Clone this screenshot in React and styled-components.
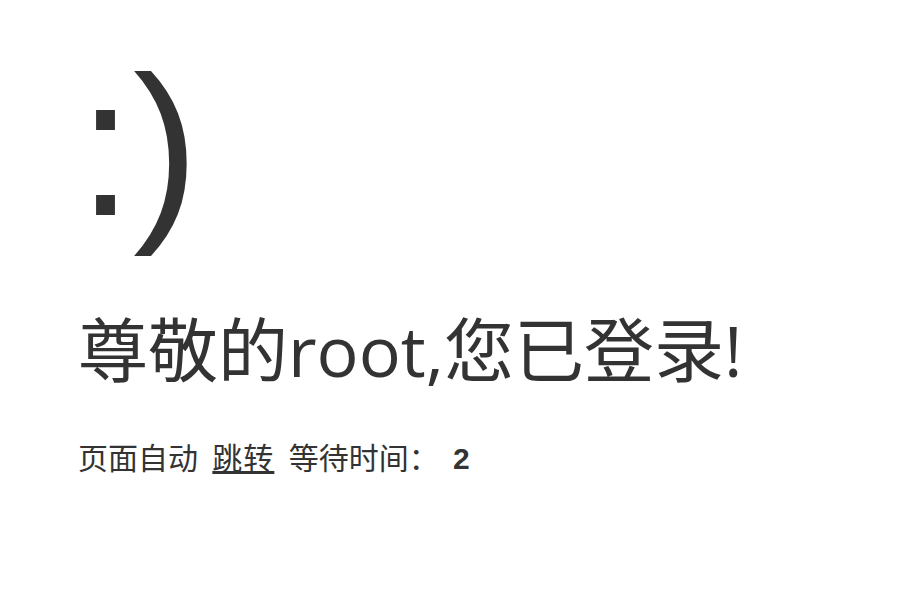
import React from 'react'
import styled, { createGlobalStyle } from 'styled-components'

const GlobalStyle = createGlobalStyle`
  * { padding: 0; margin: 0; }
  body {
    background: #fff;
    font-family: "Liberation Sans", "Noto Sans CJK SC", sans-serif;
    color: #333;
    font-size: 30px;
  }
`

const App = () => {
  const [wait] = React.useState(2)

  return (
    <>
      <GlobalStyle />
      <SystemMessage>
        <Face>:)</Face>
        <Success>尊敬的root,您已登录!</Success>
        <Jump>
          页面自动 <JumpLink href="#">跳转</JumpLink> 等待时间： <Wait>{wait}</Wait>
        </Jump>
      </SystemMessage>
    </>
  )
}

const SystemMessage = styled.div`
  padding: 40px 78px;
`

const Face = styled.h1`
  font-family: "Liberation Sans", sans-serif;
  font-size: 198px;
  font-weight: normal;
  line-height: 213px;
  margin-bottom: 34px;
`

const Success = styled.p`
  font-family: "Open Sans", "Noto Sans CJK SC", sans-serif;
  font-size: 70px;
  line-height: 1.8em;
`

const Jump = styled.p`
  padding-top: 21px;
  font-family: "Liberation Sans", "Noto Sans CJK SC", sans-serif;
  font-size: 30px;
  word-spacing: 6px;
`

const JumpLink = styled.a`
  color: #333;
  letter-spacing: 1px;
`

const Wait = styled.b`
  font-weight: bold;
`

export default App
